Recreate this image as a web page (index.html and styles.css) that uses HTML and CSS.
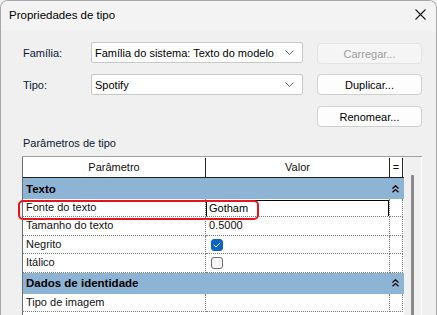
FILE: index.html
```html
<!DOCTYPE html>
<html>

<head>
  <meta charset="UTF-8">
  <link rel="stylesheet" href="styles.css">
</head>

<body>
  <div class="window">
    <div class="titlebar">
      <span class="title">Propriedades de tipo</span>
      <svg class="close" width="11" height="11" viewBox="0 0 11 11">
        <path d="M0.5 0.5 L10.5 10.5 M10.5 0.5 L0.5 10.5" stroke="#1a1a1a" stroke-width="1.1" fill="none" />
      </svg>
    </div>

    <div class="content">
      <div class="form-grid">
        <label class="field-label">Família:</label>
        <div class="combo">
          <span>Família do sistema: Texto do modelo</span>
          <svg width="9" height="5" viewBox="0 0 9 5"><path d="M0.5 0.5 L4.5 4.5 L8.5 0.5" stroke="#666" fill="none" /></svg>
        </div>
        <button class="btn btn-disabled row-1">Carregar...</button>

        <label class="field-label">Tipo:</label>
        <div class="combo">
          <span>Spotify</span>
          <svg width="9" height="5" viewBox="0 0 9 5"><path d="M0.5 0.5 L4.5 4.5 L8.5 0.5" stroke="#666" fill="none" /></svg>
        </div>
        <button class="btn">Duplicar...</button>

        <span></span>
        <span></span>
        <button class="btn">Renomear...</button>
      </div>

      <div class="section-label">Parâmetros de tipo</div>

      <div class="grid-wrap">
        <div class="param-table">
          <div class="row head">
            <div class="cell">Parâmetro</div>
            <div class="cell">Valor</div>
            <div class="cell">=</div>
          </div>

          <div class="group">
            <span>Texto</span>
            <svg width="7" height="8" viewBox="0 0 7 8"><path d="M0.5 3.5 L3.5 0.8 L6.5 3.5 M0.5 7.3 L3.5 4.6 L6.5 7.3" stroke="#000" stroke-width="1.3" fill="none" /></svg>
          </div>
          <div class="row item">
            <div class="cell">Fonte do texto</div>
            <div class="cell"><div class="edit-box">Gotham</div></div>
            <div class="cell"></div>
            <div class="highlight"></div>
          </div>
          <div class="row item">
            <div class="cell">Tamanho do texto</div>
            <div class="cell">0.5000</div>
            <div class="cell"></div>
          </div>
          <div class="row item">
            <div class="cell">Negrito</div>
            <div class="cell"><span class="check checked"><svg width="8" height="6" viewBox="0 0 8 6"><path d="M0.8 3 L3 5 L7.2 0.8" stroke="#fff" stroke-width="1" fill="none" /></svg></span></div>
            <div class="cell"></div>
          </div>
          <div class="row item">
            <div class="cell">Itálico</div>
            <div class="cell"><span class="check"></span></div>
            <div class="cell"></div>
          </div>

          <div class="group">
            <span>Dados de identidade</span>
            <svg width="7" height="8" viewBox="0 0 7 8"><path d="M0.5 3.5 L3.5 0.8 L6.5 3.5 M0.5 7.3 L3.5 4.6 L6.5 7.3" stroke="#000" stroke-width="1.3" fill="none" /></svg>
          </div>
          <div class="row item">
            <div class="cell">Tipo de imagem</div>
            <div class="cell"></div>
            <div class="cell"></div>
          </div>
        </div>

        <div class="scrollbar">
          <div class="thumb"></div>
        </div>
      </div>
    </div>
  </div>
</body>

</html>
```

FILE: styles.css
```css
html,
body {
  margin: 0;
  padding: 0;
  width: 437px;
  height: 315px;
  overflow: hidden;
  background: #f0f0f0;
  font-family: 'Segoe UI', 'Liberation Sans', Arial, sans-serif;
  font-size: 11px;
  color: #111;
}

.window {
  width: 437px;
  height: 315px;
  box-sizing: border-box;
  border: 1px solid #a8a8a8;
  border-bottom: none;
  border-radius: 8px 8px 0 0;
  background: #f0f0f0;
  overflow: hidden;
}

.titlebar {
  height: 30px;
  display: flex;
  align-items: center;
  justify-content: space-between;
  padding: 0 10px 0 8px;
  background: #f3f3f3;
}

.title {
  font-size: 11.5px;
  color: #000;
  margin-top: -2px;
}

.close {
  margin-top: -4px;
}

.content {
  padding: 11px 0 0 21px;
}

/* 上方表单 */
.form-grid {
  display: grid;
  grid-template-columns: 55px 212px 105px;
  grid-template-rows: 21px 21px 21px;
  column-gap: 14px;
  row-gap: 11px;
  align-items: center;
}

.field-label {
  color: #0c1a33;
  padding-left: 1px;
}

.combo {
  height: 21px;
  box-sizing: border-box;
  background: #fff;
  border: 1px solid #c8c8c8;
  border-radius: 2px;
  display: flex;
  align-items: center;
  justify-content: space-between;
  padding: 0 8px 0 3px;
  color: #000;
  white-space: nowrap;
}

.btn {
  height: 21px;
  box-sizing: border-box;
  background: #fdfdfd;
  border: 1px solid #d0d0d0;
  border-radius: 4px;
  font-family: inherit;
  font-size: 11px;
  color: #000;
  padding: 0;
}

.btn.row-1 {
  margin-top: 2px;
}

.btn-disabled {
  background: #f5f5f5;
  border-color: #e3e3e3;
  color: #9d9d9d;
}

.section-label {
  margin-top: 8px;
  line-height: 16px;
  color: #0c1a33;
  padding-left: 1px;
}

/* 参数表格 */
.grid-wrap {
  margin-top: 5px;
  width: 400px;
  display: flex;
  border-top: 1px solid #a0a0a0;
}

.param-table {
  width: 382px;
  flex: none;
  box-sizing: border-box;
  border-left: 1px solid #6d6d6d;
  background: #fff;
}

.row {
  display: grid;
  grid-template-columns: 183px 184px 13px;
  position: relative;
}

.row .cell {
  box-sizing: border-box;
  white-space: nowrap;
  overflow: hidden;
}

.head {
  height: 21px;
  border-top: 1px solid #fff;
  border-bottom: 1px solid #222;
  box-sizing: border-box;
}

.head .cell {
  text-align: center;
  line-height: 19px;
  border-right: 1px solid #222;
}

.group {
  height: 21px;
  background: #8db3d5;
  display: flex;
  align-items: center;
  justify-content: space-between;
  padding: 0 5px 0 3px;
  font-weight: bold;
  font-size: 11.5px;
  color: #000;
}

.item {
  height: 18.4px;
}

.item .cell {
  line-height: 17px;
  padding-left: 3px;
  border-right: 1px dotted #808080;
  border-bottom: 1px dotted #808080;
}

.edit-box {
  margin: 1px 0 0 -3px;
  height: 17px;
  box-sizing: border-box;
  border: 1px solid #000;
  line-height: 15px;
  padding-left: 2px;
  color: #000;
}

.check {
  display: inline-block;
  width: 12px;
  height: 12px;
  box-sizing: border-box;
  margin: 3px 0 0 2px;
  border: 1px solid #6f6f6f;
  border-radius: 3px;
  background: #f7f7f7;
  vertical-align: top;
  position: relative;
}

.check.checked {
  background: #0a64c4;
  border-color: #0a64c4;
}

.check svg {
  position: absolute;
  left: 1px;
  top: 2px;
}

.highlight {
  position: absolute;
  left: -5px;
  top: 1px;
  width: 241px;
  height: 20px;
  box-sizing: border-box;
  border: 2px solid #e8141c;
  border-radius: 5px;
  pointer-events: none;
}

.scrollbar {
  width: 18px;
  flex: none;
  box-sizing: border-box;
  border-right: 1px solid #fdfdfd;
  display: flex;
  justify-content: center;
  padding-top: 18px;
}

.thumb {
  width: 3px;
  height: 200px;
  background: #8a8a8a;
  border-radius: 1px;
}
```
